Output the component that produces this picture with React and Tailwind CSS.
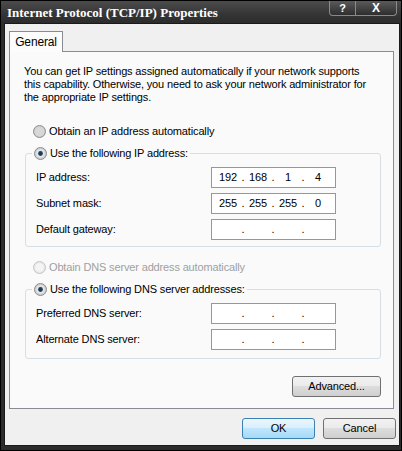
import React from 'react';

const ui = { fontFamily: '"Liberation Sans", Arial, sans-serif' };

function Radio({ checked, disabled }) {
  const id = checked ? 'rc' : disabled ? 'rd' : 'ru';
  return (
    <svg width="13" height="13" viewBox="0 0 13 13" className="shrink-0">
      <defs>
        <radialGradient id={id} cx="0.5" cy="0.5" r="0.5">
          <stop offset="0" stopColor={disabled ? '#f4f4f4' : '#f2f2f2'} />
          <stop offset="1" stopColor={disabled ? '#e6e6e6' : '#c8c8c8'} />
        </radialGradient>
      </defs>
      <circle cx="6.5" cy="6.5" r="6" fill={`url(#${id})`} stroke={disabled ? '#c4c4c4' : '#8e8f8f'} />
      <circle cx="6.5" cy="6.5" r="4" fill={disabled ? '#f4f4f4' : checked ? '#e4e8ec' : '#d8d8d8'} />
      {checked && <circle cx="6.5" cy="6.5" r="2.4" fill="#1f3e5a" />}
    </svg>
  );
}

function IpBox({ parts }) {
  const p = parts || ['', '', '', ''];
  return (
    <div className="w-[125px] h-[21px] bg-white border border-[#979797] flex items-center pl-[4px] text-[11px] text-black leading-none">
      {p.map((v, i) => (
        <React.Fragment key={i}>
          <span className="w-[24px] text-center">{v}</span>
          {i < 3 && <span className="w-[6px] text-center">.</span>}
        </React.Fragment>
      ))}
    </div>
  );
}

function Field({ label, parts, className = '' }) {
  return (
    <div className={`flex items-center h-[21px] ${className}`}>
      <span className="w-[185px] pl-[10px]">{label}</span>
      <IpBox parts={parts} />
    </div>
  );
}

function Btn({ children, primary, className = '' }) {
  return (
    <button
      className={`h-[21px] rounded-[3px] border text-[11px] text-black leading-none ${
        primary
          ? 'border-[#3c7fb1] bg-[linear-gradient(to_bottom,#eaf6fd_0%,#d9f0fc_45%,#bee6fd_50%,#a7d9f5_100%)]'
          : 'border-[#707070] bg-[linear-gradient(to_bottom,#f2f2f2_0%,#ebebeb_45%,#dddddd_50%,#cfcfcf_100%)]'
      } ${className}`}
      style={ui}
    >
      {children}
    </button>
  );
}

export default function App() {
  return (
    <div className="w-[402px] h-[451px] bg-[#2c2c2c] border border-black flex flex-col overflow-hidden" style={ui}>
      {/* title bar */}
      <div className="h-[22px] shrink-0 flex items-start justify-between bg-[linear-gradient(to_bottom,#4c4c4c,#353535_60%,#2c2c2c)]">
        <span
          className="mt-[5px] ml-[6px] text-white text-[13px] font-bold leading-none"
          style={{ fontFamily: '"Liberation Serif", "Times New Roman", serif' }}
        >
          Internet Protocol (TCP/IP) Properties
        </span>
        <div className="flex mr-[4px]">
          <div className="w-[27px] h-[15px] border border-[#8a8a8a] border-t-0 rounded-bl-[4px] bg-[linear-gradient(to_bottom,#5a5a5a,#2e2e2e)] flex items-center justify-center text-white text-[11px] font-bold leading-none">
            ?
          </div>
          <div className="w-[41px] h-[15px] border border-[#8a8a8a] border-t-0 border-l-0 rounded-br-[4px] bg-[linear-gradient(to_bottom,#5a5a5a,#2e2e2e)] flex items-center justify-center text-white text-[12px] font-bold leading-none">
            X
          </div>
        </div>
      </div>

      {/* client */}
      <div className="flex-1 ml-[3px] mr-[1px] mb-[4px] bg-[#f0f0f0] border border-[#1a1a1a] flex flex-col text-[11px] text-black tracking-[-0.15px]">
        {/* tab */}
        <div className="ml-[4px] mt-[7px] w-[54px] h-[21px] bg-[#fcfcfc] border border-[#898c95] border-b-0 flex items-center justify-center relative z-10 -mb-px text-[12px]">
          General
        </div>
        {/* panel */}
        <div className="ml-[4px] w-[385px] h-[358px] bg-[#fafafa] border border-[#898c95] flex flex-col">
          <p className="mt-[13px] ml-[14px] leading-[13px] whitespace-nowrap">
            You can get IP settings assigned automatically if your network supports
            <br />
            this capability. Otherwise, you need to ask your network administrator for
            <br />
            the appropriate IP settings.
          </p>

          <div className="mt-[21px] ml-[23px] flex items-center gap-[3px] h-[13px]">
            <Radio />
            <span>Obtain an IP address automatically</span>
          </div>

          <fieldset className="mt-[9px] ml-[15px] w-[356px] border border-[#d5dfe5] rounded-[3px] pb-[6px]">
            <legend className="ml-[6px] px-[2px] h-[13px]">
              <div className="flex items-center gap-[3px] h-[13px]">
                <Radio checked />
                <span>Use the following IP address:</span>
              </div>
            </legend>
            <Field label="IP address:" parts={['192', '168', '1', '4']} className="mt-[7px]" />
            <Field label="Subnet mask:" parts={['255', '255', '255', '0']} className="mt-[5px]" />
            <Field label="Default gateway:" className="mt-[5px]" />
          </fieldset>

          <div className="mt-[14px] ml-[23px] flex items-center gap-[3px] h-[13px] text-[#a0a0a0]">
            <Radio disabled />
            <span>Obtain DNS server address automatically</span>
          </div>

          <fieldset className="mt-[9px] ml-[15px] w-[356px] border border-[#d5dfe5] rounded-[3px] pb-[8px]">
            <legend className="ml-[6px] px-[2px] h-[13px]">
              <div className="flex items-center gap-[3px] h-[13px]">
                <Radio checked />
                <span>Use the following DNS server addresses:</span>
              </div>
            </legend>
            <Field label="Preferred DNS server:" className="mt-[7px]" />
            <Field label="Alternate DNS server:" className="mt-[5px]" />
          </fieldset>

          <div className="mt-[17px] flex justify-end pr-[12px]">
            <Btn className="w-[89px]">Advanced...</Btn>
          </div>
        </div>

        <div className="mt-[9px] flex justify-end gap-[8px] pr-[3px]">
          <Btn primary className="w-[73px]">OK</Btn>
          <Btn className="w-[73px]">Cancel</Btn>
        </div>
      </div>
    </div>
  );
}
